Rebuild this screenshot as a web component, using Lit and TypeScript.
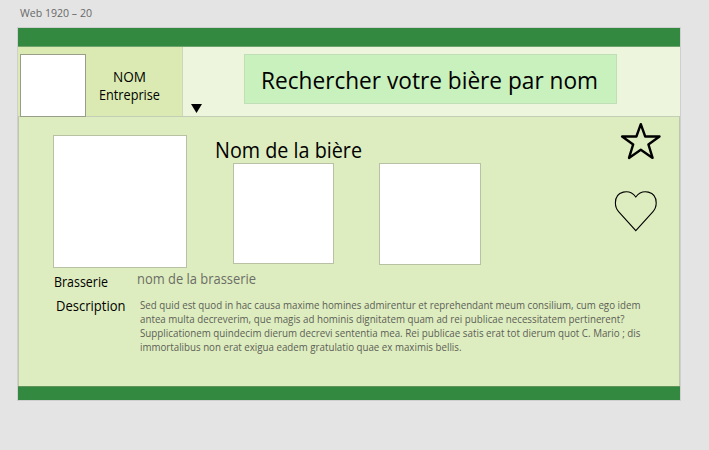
import { LitElement, html, css } from "lit";
import { customElement, property } from "lit/decorators.js";

// One line of text, set to an exact measure. The baseline sits 4/5 down the line box.
@customElement("text-line")
class TextLine extends LitElement {
  @property() text = "";
  @property({ type: Number }) measure = 100;
  @property({ type: Number }) size = 14;
  @property({ type: Number }) leading = 18;

  static styles = css`
    :host { display: block; flex: none; }
    svg { display: block; overflow: visible; }
    text { font-family: "Open Sans", "Noto Sans", sans-serif; fill: currentColor; }
  `;

  render() {
    return html`<svg width=${this.measure} height=${this.leading}>
      <text x="0" y=${this.leading * 0.8} font-size=${this.size}
        textLength=${this.measure} lengthAdjust="spacingAndGlyphs">${this.text}</text>
    </svg>`;
  }
}

const line = (text: string, measure: number, size: number, leading: number) =>
  html`<text-line .text=${text} .measure=${measure} .size=${size} .leading=${leading}></text-line>`;

const description: [string, number][] = [
  ["Sed quid est quod in hac causa maxime homines admirentur et reprehendant meum consilium, cum ego idem", 500.5],
  ["antea multa decreverim, que magis ad hominis dignitatem quam ad rei publicae necessitatem pertinerent?", 484.5],
  ["Supplicationem quindecim dierum decrevi sententia mea. Rei publicae satis erat tot dierum quot C. Mario ; dis", 500.5],
  ["immortalibus non erat exigua eadem gratulatio quae ex maximis bellis.", 321.5],
];

@customElement("app-root")
class AppRoot extends LitElement {
  static styles = css`
    :host { display: block; height: 450px; background: #e4e4e4; color: #000; overflow: hidden; }
    * { box-sizing: border-box; }
    .label { padding: 5px 0 0 20px; height: 27px; color: #686868; }
    .board { width: 664px; height: 374px; margin-left: 17px; border: 1px solid #cfcfcf; display: flex; flex-direction: column; }
    .bar { flex: none; height: 19px; background: #32893f; border-bottom: 1px solid #6fa36c; }
    .bar.foot { height: 14px; border-bottom: 0; border-top: 1px solid #62935c; }
    header { flex: none; display: flex; height: 69px; background: #edf5dd; }
    .brand { display: flex; width: 165px; background: #daeab2; border-right: 1px solid #ccd6b8; }
    .logo { width: 66px; height: 63px; margin: 7px 0 0 2px; background: #fff; border: 1px solid #979f89; z-index: 1; }
    .name { flex: 1; display: flex; flex-direction: column; align-items: center; padding: 21px 10px 0 0; }
    .arrow { width: 11px; height: 9px; margin: 57px 0 0 8px; display: block; }
    .search { width: 373px; height: 50px; margin: 7px 0 0 42px; padding: 10px 0 0 15.5px; background: #c9f1be; border: 1px solid #c0dfb8; }
    main { flex: 1; display: flex; flex-direction: column; background: #deedbf; border: 1px solid #bdc7a9; border-top: 1px solid #c4cdb6; border-bottom: 0; }
    .top { display: flex; height: 152px; }
    .photo { flex: none; background: #fff; border: 1px solid #b8c1a4; }
    .main-photo { width: 134px; height: 133px; margin: 18px 0 0 34px; }
    .beer { width: 294px; padding: 19px 0 0 27.5px; }
    .shots { display: flex; margin-left: 0.5px; }
    .small { width: 101px; height: 101px; margin-left: 18px; }
    .large { width: 102px; height: 102px; margin-left: 45px; }
    .marks { flex: none; width: 44px; margin: 5px 0 0 134px; }
    .marks svg { display: block; overflow: visible; }
    .heart { margin-top: 24px; }
    .row { display: flex; color: #000; }
    .brewery { height: 26px; padding-left: 35px; }
    .brewery .value { margin: -3px 0 0 29px; color: #6b6d66; }
    .desc { padding-left: 36.5px; }
    .desc .value { margin: 3px 0 0 14.5px; color: #5c5e58; }
  `;

  render() {
    return html`
      <div class="label">${line("Web 1920 – 20", 72, 11, 15)}</div>
      <div class="board">
        <div class="bar"></div>
        <header>
          <div class="brand">
            <div class="logo"></div>
            <div class="name">
              ${line("NOM", 33, 14, 18)}
              ${line("Entreprise", 61, 14, 18)}
            </div>
          </div>
          <svg class="arrow" viewBox="0 0 11 9"><path d="M0 0H11L5.5 9Z" /></svg>
          <div class="search">${line("Rechercher votre bière par nom", 337, 24.4, 30)}</div>
        </header>
        <main>
          <div class="top">
            <div class="photo main-photo"></div>
            <div class="beer">
              ${line("Nom de la bière", 147, 21.3, 27)}
              <div class="shots">
                <div class="photo small"></div>
                <div class="photo large"></div>
              </div>
            </div>
            <div class="marks">
              <svg width="44" height="40" viewBox="0 0 44 40">
                <path d="M25.8 2.2L30.2 14.5H44.5L33.4 22.4L37.6 35.9L25.8 27.8L14 35.9L18.2 22.4L7.1 14.5H21.4Z"
                  fill="none" stroke="#000" stroke-width="2.4" stroke-linejoin="round" />
              </svg>
              <svg class="heart" width="44" height="44" viewBox="0 0 44 44">
                <path d="M20.8 11C14.5 2.5 .4 4.5 .4 17C.4 20.8 1.6 23.4 3.8 25.8L20.8 44.6L37.8 25.8C40 23.4 41.2 20.8 41.2 17C41.2 4.5 27.1 2.5 20.8 11Z"
                  fill="none" stroke="#000" stroke-width="1.1" />
              </svg>
            </div>
          </div>
          <div class="row brewery">
            ${line("Brasserie", 54, 14, 22)}
            <div class="value">${line("nom de la brasserie", 119, 14, 22)}</div>
          </div>
          <div class="row desc">
            ${line("Description", 69.5, 14, 20)}
            <div class="value">${description.map(([text, measure]) => line(text, measure, 10.4, 14))}</div>
          </div>
        </main>
        <div class="bar foot"></div>
      </div>
    `;
  }
}
